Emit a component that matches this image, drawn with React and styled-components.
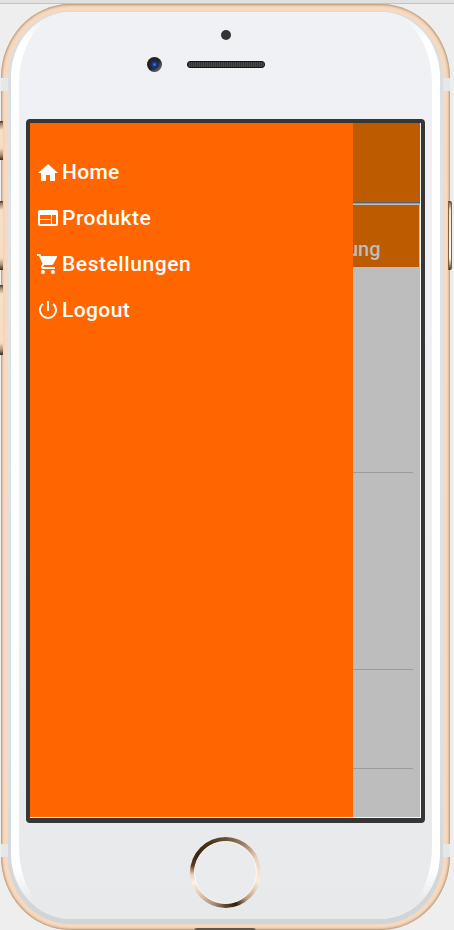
import React from 'react';
import styled, { createGlobalStyle } from 'styled-components';
import { MdHome, MdWeb, MdShoppingCart, MdPowerSettingsNew } from 'react-icons/md';

const GlobalStyle = createGlobalStyle`
  *, *::before, *::after { box-sizing: border-box; }
  body { margin: 0; background: #eeeeee; font-family: Roboto, sans-serif; overflow: hidden; }
`;

const Page = styled.div`
  position: relative;
  width: 454px;
  height: 930px;
  overflow: hidden;
  background: #eeeeee;
`;

const TopStrip = styled.div`
  height: 4px;
  background: #e1e1e1;
  border-bottom: 1px solid #c3c3c3;
`;

const SideButton = styled.div`
  position: absolute;
  top: ${(p) => p.$top}px;
  ${(p) => (p.$right ? 'left: 448px; width: 4px;' : 'left: -2px; width: 5px;')}
  height: ${(p) => p.$height}px;
  border-radius: ${(p) => (p.$right ? '0 2px 2px 0' : '0')};
  border-right: ${(p) => (p.$right ? '1px solid #7c6144' : 'none')};
  border-left: ${(p) => (p.$right ? '1px solid #7c6144' : 'none')};
  background: linear-gradient(#4a3728 0, #a08468 3px, #f7dfc8 9px, ${(p) => (p.$right ? '#fffaf4' : '#f7dcc3')} calc(100% - 12px), #a88c70 calc(100% - 5px), #3b2b1f 100%);
`;

const Body = styled.div`
  position: relative;
  width: 449px;
  height: 926px;
  margin-left: 1px;
  padding: 7px 7px 6px;
  border-radius: 69px / 74px;
  overflow: hidden;
  background: #f6d9bf;
  box-shadow: inset 0 0 2px 1px #b99b7e, inset 0 0 3px 1px #e0bd9d;
`;

const Antenna = styled.div`
  position: absolute;
  top: ${(p) => p.$top}px;
  left: 0;
  width: 449px;
  height: 13px;
  background: #e5e8e8;
`;

const Rim = styled.div`
  position: relative;
  height: 100%;
  padding: 1px 3px 5px;
  border-radius: 62px / 67px;
  background: linear-gradient(#d9dcdf, #dfe2e5 20%, #dce0e4 80%, #d1d4d6);
`;

const Gloss = styled.div`
  height: 100%;
  padding: 0 8px;
  border-radius: 59px / 65px;
  background: linear-gradient(#eff1f3 0, #eff1f3 8px, #fff 30px, #fff calc(100% - 50px), #e7e9eb calc(100% - 18px));
`;

const Face = styled.div`
  height: 100%;
  display: flex;
  flex-direction: column;
  align-items: center;
  border-radius: 50px / 72px;
  background: linear-gradient(#f0f1f4, #eeeff1 55%, #e7e9eb);
`;

const SensorBar = styled.div`
  display: grid;
  grid-template-columns: 15px 78px;
  grid-template-rows: 10px 15px;
  column-gap: 25px;
  row-gap: 17px;
  align-items: center;
  width: 118px;
  margin: 18px 40px 47px 0;
`;

const Proximity = styled.div`
  grid-column: 2;
  justify-self: center;
  width: 10px;
  height: 10px;
  border-radius: 50%;
  background: #343434;
`;

const Camera = styled.div`
  width: 15px;
  height: 15px;
  border-radius: 50%;
  background:
    radial-gradient(circle, #5b80d0 0, #173a91 2px, #182b63 3.5px, transparent 5px),
    linear-gradient(135deg, #222 50%, #777 95%);
`;

const Speaker = styled.div`
  width: 78px;
  height: 7px;
  border: 1px solid #141414;
  border-radius: 3px;
  background: repeating-linear-gradient(90deg, #333 0 1px, #484848 1px 2px);
`;

const Screen = styled.div`
  flex: none;
  display: flex;
  width: 399px;
  height: 704px;
  padding: 0 1px 1px 0;
  border: 4px solid #363636;
  border-bottom-width: 5px;
  border-radius: 4px;
  background: #f4f4f4;
`;

const Drawer = styled.nav`
  width: 323px;
  padding: 26px 6px;
  background: #ff6600;
`;

const MenuItem = styled.div`
  display: flex;
  align-items: center;
  gap: 2px;
  height: 46px;
  color: #fff;
  font-size: 21px;
  font-weight: 500;
  letter-spacing: ${(p) => p.$tracking}px;
  white-space: nowrap;

  svg { width: 24px; height: 24px; flex: none; }
  &:first-child svg { margin-top: 2px; }
`;

const Backdrop = styled.div`
  flex: 1;
  min-width: 0;
  overflow: hidden;
  background: #bdbdbd;
`;

const Header = styled.div`
  height: 80px;
  margin-bottom: 2px;
  background: #bd5b00;
  border-bottom: 1px solid #5f6062;
  box-shadow: 0 1px 0 #9a9b9d;
`;

const TabBar = styled.div`
  height: 62px;
  margin-right: 1px;
  padding-top: 32px;
  background: #bd5b00;
  color: #bdbdbd;
  font-size: 20px;
  font-weight: 500;
  line-height: 24px;
`;

const TabLabel = styled.span`
  display: block;
  margin-left: -6px;
`;

const ListRow = styled.div`
  height: ${(p) => p.$height}px;
  margin-right: 7px;
  border-bottom: 1px solid #9c9c9c;
`;

const HomeButton = styled.div`
  flex: none;
  width: 71px;
  height: 71px;
  margin-top: 14px;
  padding: 4px;
  border-radius: 50%;
  background: conic-gradient(#665038 0deg, #a18468 35deg, #ead2bd 65deg, #f8efdc 105deg, #dcc4a6 125deg, #b79b82 142deg, #2f1d0e 162deg, #60462d 180deg, #a98e77 200deg, #dbc1aa 225deg, #fff2e5 253deg, #e8cdb6 267deg, #5b3b21 282deg, #3a2411 300deg, #4b3217 330deg, #665038 360deg);
`;

const HomeFace = styled.div`
  height: 100%;
  border-radius: 50%;
  border: 1px solid #fafafa;
  background: #e9ebed;
`;

const BottomPort = styled.div`
  position: absolute;
  left: 194px;
  top: 928px;
  width: 62px;
  height: 4px;
  border-radius: 3px 3px 0 0;
  background: #645547;
`;

const menu = [
  { label: 'Home', Icon: MdHome, tracking: 0.3 },
  { label: 'Produkte', Icon: MdWeb, tracking: 0.5 },
  { label: 'Bestellungen', Icon: MdShoppingCart, tracking: 0.56 },
  { label: 'Logout', Icon: MdPowerSettingsNew, tracking: 0.4 },
];

export default function App() {
  return (
    <>
      <GlobalStyle />
      <Page>
        <TopStrip />
        <Body>
          <Antenna $top={74} />
          <Antenna $top={840} />
          <Rim>
            <Gloss>
              <Face>
                <SensorBar>
                  <Proximity />
                  <Camera />
                  <Speaker />
                </SensorBar>
                <Screen>
                  <Drawer>
                    {menu.map(({ label, Icon, tracking }) => (
                      <MenuItem key={label} $tracking={tracking}>
                        <Icon />
                        <span>{label}</span>
                      </MenuItem>
                    ))}
                  </Drawer>
                  <Backdrop>
                    <Header />
                    <TabBar>
                      <TabLabel>ung</TabLabel>
                    </TabBar>
                    <ListRow $height={206} />
                    <ListRow $height={197} />
                    <ListRow $height={99} />
                  </Backdrop>
                </Screen>
                <HomeButton>
                  <HomeFace />
                </HomeButton>
              </Face>
            </Gloss>
          </Rim>
        </Body>
        <SideButton $top={121} $height={39} />
        <SideButton $top={201} $height={69} />
        <SideButton $top={285} $height={70} />
        <SideButton $right $top={201} $height={69} />
        <BottomPort />
      </Page>
    </>
  );
}
